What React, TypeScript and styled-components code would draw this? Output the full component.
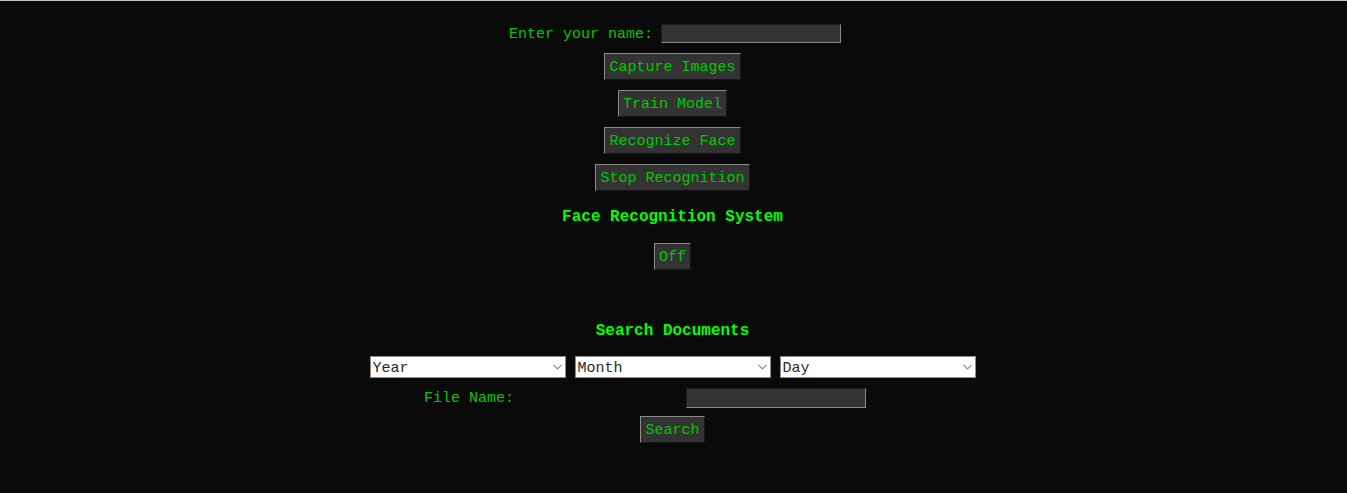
import React from "react";
import styled, { createGlobalStyle } from "styled-components";

const Global = createGlobalStyle`
  html, body { margin: 0; padding: 0; }
  body {
    background: #0a0a0a;
    border-top: 1px solid #c4c4c4;
    font-family: "Liberation Mono", "Courier New", monospace;
    color: #00c800;
  }
`;

const Page = styled.main`
  display: flex;
  flex-direction: column;
  align-items: center;
  padding: 23px 2px 0 0;
`;

const NameRow = styled.div`
  display: flex;
  align-items: center;
  gap: 8px;
  height: 19px;
  margin-bottom: 10px;
  padding-left: 5px;
`;

const Label = styled.label`
  font-size: 15px;
  line-height: 19px;
  color: #00c800;
  padding-top: 2px;
`;

const TextInput = styled.input`
  box-sizing: border-box;
  width: 180px;
  height: 19px;
  background: #333333;
  border: 1px solid;
  border-color: #1e1e1e #8a8a8a #8a8a8a #1e1e1e;
  color: #00c800;
  font-family: inherit;
  font-size: 14px;
  padding: 0 3px;
  margin: 0;
  outline: none;
`;

const Button = styled.button<{ $mb?: number }>`
  box-sizing: border-box;
  height: 27px;
  padding: 2px 4px 0;
  margin: 0 0 ${(p) => p.$mb ?? 10}px 0;
  background: #333333;
  border: 1px solid;
  border-color: #8c8c8c #161616 #161616 #8c8c8c;
  color: #00c800;
  font-family: "Liberation Mono", "Courier New", monospace;
  font-size: 15px;
  line-height: 23px;
  cursor: pointer;
`;

const Heading = styled.h2<{ $mt: number; $mb: number }>`
  margin: ${(p) => p.$mt}px 0 ${(p) => p.$mb}px 0;
  font-size: 16px;
  line-height: 20px;
  font-weight: bold;
  color: #00ff00;
`;

const SelectRow = styled.div`
  display: flex;
  gap: 9px;
  margin-bottom: 9px;
`;

const SelectWrap = styled.div`
  position: relative;
  width: 196px;
  height: 22px;
`;

const Select = styled.select`
  box-sizing: border-box;
  appearance: none;
  -webkit-appearance: none;
  width: 100%;
  height: 100%;
  background: #ffffff;
  border: 1px solid #8a8a8a;
  border-radius: 0;
  color: #2a2a2a;
  font-family: "Liberation Mono", "Courier New", monospace;
  font-size: 15px;
  padding: 2px 2px 0;
  margin: 0;
  outline: none;
`;

const Chevron = styled.svg`
  position: absolute;
  right: 4px;
  top: 8px;
  width: 9px;
  height: 6px;
  pointer-events: none;
`;

const FileRow = styled.div`
  display: grid;
  grid-template-columns: 1fr 1fr;
  width: 605px;
  align-items: center;
  height: 20px;
  margin: 0 0 9px;
`;

const FileLabel = styled(Label)`
  padding-left: 54px;
`;

const FileInput = styled(TextInput)`
  margin-left: 13px;
  height: 20px;
`;

function Dropdown({ label }: { label: string }) {
  return (
    <SelectWrap>
      <Select defaultValue="">
        <option value="">{label}</option>
      </Select>
      <Chevron viewBox="0 0 9 6">
        <path d="M0.5 0.8 L4.5 4.8 L8.5 0.8" fill="none" stroke="#8a8a8a" strokeWidth="1.2" />
      </Chevron>
    </SelectWrap>
  );
}

export default function App() {
  return (
    <>
      <Global />
      <Page>
        <NameRow>
          <Label htmlFor="name">Enter your name:</Label>
          <TextInput id="name" type="text" />
        </NameRow>
        <Button>Capture Images</Button>
        <Button>Train Model</Button>
        <Button>Recognize Face</Button>
        <Button $mb={0}>Stop Recognition</Button>
        <Heading $mt={16} $mb={16}>Face Recognition System</Heading>
        <Button $mb={0}>Off</Button>
        <Heading $mt={51} $mb={15}>Search Documents</Heading>
        <SelectRow>
          <Dropdown label="Year" />
          <Dropdown label="Month" />
          <Dropdown label="Day" />
        </SelectRow>
        <FileRow>
          <FileLabel htmlFor="file">File Name:</FileLabel>
          <FileInput id="file" type="text" />
        </FileRow>
        <Button $mb={0}>Search</Button>
      </Page>
    </>
  );
}
